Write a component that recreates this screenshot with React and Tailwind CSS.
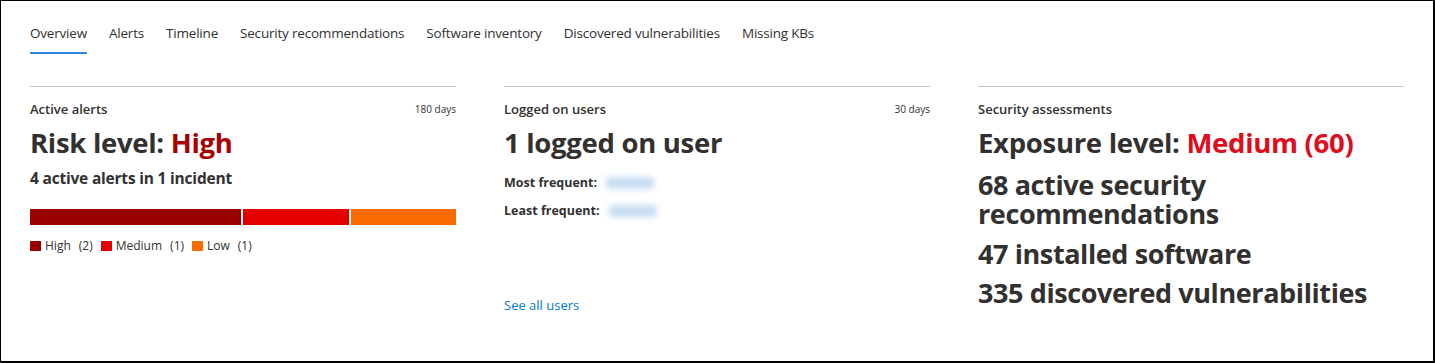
const tabs = [
  'Overview',
  'Alerts',
  'Timeline',
  'Security recommendations',
  'Software inventory',
  'Discovered vulnerabilities',
  'Missing KBs',
];

function Header({ title, days }) {
  return (
    <div className="border-t border-[#c8c6c4] pt-[12px] flex items-center justify-between">
      <span className="text-[13px] leading-[20px] font-semibold text-[#323130]">{title}</span>
      {days && <span className="text-[10px] leading-[20px] text-[#323130]">{days}</span>}
    </div>
  );
}

function Blurred() {
  return (
    <span className="inline-block ml-[9px] w-[48px] h-[12px] rounded-sm bg-[#c7dcf2] blur-[3px]" />
  );
}

export default function App() {
  return (
    <div
      className="w-[1435px] h-[363px] bg-white border-l border-t border-r-2 border-b-2 border-black text-[#323130] overflow-hidden"
      style={{ fontFamily: '"Open Sans", "Noto Sans", sans-serif' }}
    >
      {/* Tabs */}
      <div className="flex gap-[22px] pl-[29px] pt-[22px]">
        {tabs.map((t, i) => (
          <div key={t} className="flex flex-col">
            <span className="text-[13.5px] leading-[20px] tracking-[-0.2px] text-[#323130]">{t}</span>
            <span
              className={`mt-[9px] h-[2px] ${i === 0 ? 'bg-[#2b88d8]' : 'bg-transparent'}`}
            />
          </div>
        ))}
      </div>

      {/* Cards */}
      <div className="grid grid-cols-3 gap-[48px] px-[29px] pt-[32px]">
        {/* Active alerts */}
        <div className="flex flex-col">
          <Header title="Active alerts" days="180 days" />
          <div className="mt-[7px] text-[27.5px] leading-[34px] font-bold tracking-[-0.3px]">
            Risk level: <span className="text-[#a80000]">High</span>
          </div>
          <div className="mt-[8px] text-[15.5px] leading-[20px] font-bold tracking-[-0.2px]">4 active alerts in 1 incident</div>
          <div className="mt-[21px] flex gap-[2px] h-[16px]">
            <div className="flex-[2] bg-[#9b0000]" />
            <div className="flex-1 bg-[#e50000]" />
            <div className="flex-1 bg-[#f76b00]" />
          </div>
          <div className="mt-[13px] flex items-center text-[12px] leading-[16px] text-[#323130]">
            <span className="w-[11px] h-[10px] bg-[#9b0000] mr-[4px]" />
            <span>High</span>
            <span className="ml-[8px]">(2)</span>
            <span className="w-[11px] h-[10px] bg-[#e50000] ml-[8px] mr-[4px]" />
            <span>Medium</span>
            <span className="ml-[8px]">(1)</span>
            <span className="w-[11px] h-[10px] bg-[#f76b00] ml-[8px] mr-[4px]" />
            <span>Low</span>
            <span className="ml-[8px]">(1)</span>
          </div>
        </div>

        {/* Logged on users */}
        <div className="flex flex-col">
          <Header title="Logged on users" days="30 days" />
          <div className="mt-[7px] text-[27.5px] leading-[34px] font-bold tracking-[-0.3px]">1 logged on user</div>
          <div className="mt-[14px] flex items-center text-[12.5px] leading-[18px] font-bold">
            <span>Most frequent:</span>
            <Blurred />
          </div>
          <div className="mt-[10px] flex items-center text-[12.5px] leading-[18px] font-bold">
            <span>Least frequent:</span>
            <Blurred />
          </div>
          <a className="mt-[76px] text-[13px] leading-[18px] text-[#0078d4]">See all users</a>
        </div>

        {/* Security assessments */}
        <div className="flex flex-col">
          <Header title="Security assessments" />
          <div className="mt-[7px] text-[27.5px] leading-[34px] font-bold tracking-[-0.3px]">
            Exposure level: <span className="text-[#e00b1c]">Medium (60)</span>
          </div>
          <div className="mt-[10px] text-[27px] leading-[29px] font-bold tracking-[-0.4px] w-[260px]">
            68 active security recommendations
          </div>
          <div className="mt-[10.5px] text-[27px] leading-[29px] font-bold tracking-[-0.4px]">47 installed software</div>
          <div className="mt-[10.5px] text-[27px] leading-[29px] font-bold tracking-[-0.4px]">335 discovered vulnerabilities</div>
        </div>
      </div>
    </div>
  );
}
